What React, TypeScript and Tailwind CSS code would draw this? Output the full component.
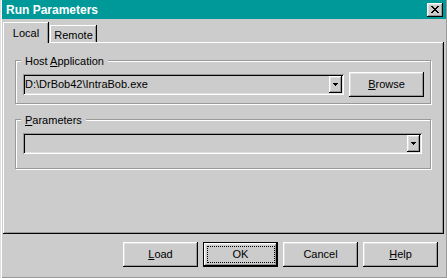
import { ReactNode } from 'react';

// classic 3d edges, drawn with inset shadows so they take no layout room
const raised =
    'shadow-[inset_-1px_-1px_0_#000,inset_1px_1px_0_#fff,inset_-2px_-2px_0_#999,inset_2px_2px_0_#dfdfdf]';
const sunken =
    'shadow-[inset_1px_1px_0_#999,inset_-1px_-1px_0_#fff,inset_2px_2px_0_#000,inset_-2px_-2px_0_#dfdfdf]';
const etched = 'shadow-[inset_1px_1px_0_#fff,1px_1px_0_#fff] border border-[#999]';

function Button({ children, isDefault }: { children: ReactNode; isDefault?: boolean }) {
    return (
        <div
            className={`relative w-[75px] h-[25px] flex items-center justify-center ${raised} ${
                isDefault ? 'border border-black' : ''
            }`}
        >
            {isDefault && (
                <div className="absolute left-[3px] top-[3px] right-[2px] bottom-[3px] border border-dotted border-black" />
            )}
            <span>{children}</span>
        </div>
    );
}

function ComboBox({ width, value }: { width: string; value?: string }) {
    return (
        <div className={`${width} h-[21px] flex items-stretch py-[2px] pr-[2px] ${sunken}`}>
            <div className="flex-1 flex items-center pl-[2px] pb-[1px] whitespace-nowrap">{value}</div>
            <div className={`w-[13px] flex items-center justify-center ${raised}`}>
                <svg width="5" height="3" viewBox="0 0 5 3" shapeRendering="crispEdges">
                    <rect x="0" y="0" width="5" height="1" fill="#000" />
                    <rect x="1" y="1" width="3" height="1" fill="#000" />
                    <rect x="2" y="2" width="1" height="1" fill="#000" />
                </svg>
            </div>
        </div>
    );
}

function GroupBox({ label, height, children }: { label: ReactNode; height: string; children: ReactNode }) {
    return (
        <div className={`relative w-[416px] ${height} ${etched}`}>
            <div className="absolute -top-[6px] left-[5px] px-[4px] bg-[#cccccc] leading-[13px]">{label}</div>
            {children}
        </div>
    );
}

function CloseGlyph() {
    // 8x7 pixel cross
    const rows = ['11000011', '01100110', '00111100', '00011000', '00111100', '01100110', '11000011'];
    return (
        <svg width="8" height="7" viewBox="0 0 8 7" shapeRendering="crispEdges">
            {rows.map((row, y) =>
                row.split('').map((c, x) =>
                    c === '1' ? <rect key={`${x}-${y}`} x={x} y={y} width="1" height="1" fill="#000" /> : null
                )
            )}
        </svg>
    );
}

function App() {
    return (
        <div className="w-[447px] h-[278px] bg-[#cccccc] flex flex-col text-[11px] text-black font-['Liberation_Sans',Arial,sans-serif] shadow-[inset_1px_0_0_#dfdfdf,inset_2px_0_0_#fff,inset_-1px_-1px_0_#999]">
            {/* title bar */}
            <div className="ml-[2px] mr-[1px] h-[19px] bg-[#009999] flex items-center justify-between pl-[4px] pr-[3px]">
                <span className="text-white font-bold text-[12px]">Run Parameters</span>
                <div className={`w-[16px] h-[14px] bg-[#cccccc] flex items-center justify-center ${raised}`}>
                    <CloseGlyph />
                </div>
            </div>

            {/* tabs */}
            <div className="mt-[3px] ml-[3px] h-[20px] flex items-end">
                <div className="relative z-10 w-[46px] h-[21px] -mb-[1px] bg-[#cccccc] flex justify-center pt-[3px] shadow-[inset_-1px_0_0_#000,inset_1px_1px_0_#fff,inset_-2px_0_0_#999]">
                    Local
                </div>
                <div className="ml-[1px] w-[47px] h-[17px] flex justify-center pt-[2px] shadow-[inset_-1px_0_0_#000,inset_1px_1px_0_#fff,inset_-2px_0_0_#999]">
                    Remote
                </div>
            </div>

            {/* tab page */}
            <div className="ml-[3px] w-[441px] h-[192px] pt-[18px] pl-[12px] shadow-[inset_-1px_-1px_0_#000,inset_1px_1px_0_#fff,inset_-2px_-2px_0_#999]">
                <GroupBox
                    height="h-[44px]"
                    label={
                        <>
                            Host <u>A</u>pplication
                        </>
                    }
                >
                    <div className="flex items-start gap-[5px] pl-[7px] pt-[11px]">
                        <div className="mt-[2px]">
                            <ComboBox width="w-[321px]" value="D:\DrBob42\IntraBob.exe" />
                        </div>
                        <Button>
                            <u>B</u>rowse
                        </Button>
                    </div>
                </GroupBox>

                <div className="mt-[15px]">
                    <GroupBox
                        height="h-[50px]"
                        label={
                            <>
                                <u>P</u>arameters
                            </>
                        }
                    >
                        <div className="pl-[7px] pt-[13px]">
                            <ComboBox width="w-[399px]" />
                        </div>
                    </GroupBox>
                </div>
            </div>

            {/* dialog buttons */}
            <div className="mt-[8px] pr-[9px] flex justify-end gap-[5px]">
                <Button>
                    <u>L</u>oad
                </Button>
                <Button isDefault>OK</Button>
                <Button>Cancel</Button>
                <Button>
                    <u>H</u>elp
                </Button>
            </div>
        </div>
    );
}

export default App;
